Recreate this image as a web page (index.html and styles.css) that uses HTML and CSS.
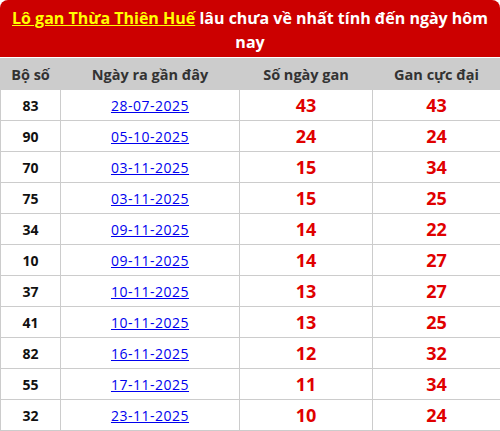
FILE: index.html
```html
<!DOCTYPE html>
<html lang="vi">
<head>
<meta charset="utf-8">
<link rel="stylesheet" href="styles.css">
</head>
<body>
<div class="box">
  <h2 class="title"><a href="#" class="hl">Lô gan Thừa Thiên Huế</a> lâu chưa về nhất tính đến ngày hôm nay</h2>
  <table class="tbl">
    <colgroup><col class="c1"><col class="c2"><col class="c3"><col class="c4"></colgroup>
    <thead>
      <tr><th>Bộ số</th><th>Ngày ra gần đây</th><th>Số ngày gan</th><th>Gan cực đại</th></tr>
    </thead>
    <tbody>
      <tr><td class="num">83</td><td><a href="#" class="date">28-07-2025</a></td><td class="red">43</td><td class="red">43</td></tr>
      <tr><td class="num">90</td><td><a href="#" class="date">05-10-2025</a></td><td class="red">24</td><td class="red">24</td></tr>
      <tr><td class="num">70</td><td><a href="#" class="date">03-11-2025</a></td><td class="red">15</td><td class="red">34</td></tr>
      <tr><td class="num">75</td><td><a href="#" class="date">03-11-2025</a></td><td class="red">15</td><td class="red">25</td></tr>
      <tr><td class="num">34</td><td><a href="#" class="date">09-11-2025</a></td><td class="red">14</td><td class="red">22</td></tr>
      <tr><td class="num">10</td><td><a href="#" class="date">09-11-2025</a></td><td class="red">14</td><td class="red">27</td></tr>
      <tr><td class="num">37</td><td><a href="#" class="date">10-11-2025</a></td><td class="red">13</td><td class="red">27</td></tr>
      <tr><td class="num">41</td><td><a href="#" class="date">10-11-2025</a></td><td class="red">13</td><td class="red">25</td></tr>
      <tr><td class="num">82</td><td><a href="#" class="date">16-11-2025</a></td><td class="red">12</td><td class="red">32</td></tr>
      <tr><td class="num">55</td><td><a href="#" class="date">17-11-2025</a></td><td class="red">11</td><td class="red">34</td></tr>
      <tr><td class="num">32</td><td><a href="#" class="date">23-11-2025</a></td><td class="red">10</td><td class="red">24</td></tr>
    </tbody>
  </table>
</div>
</body>
</html>
```
FILE: styles.css
```css
html, body {
  margin: 0;
  padding: 0;
  background: #fff;
}
body {
  font-family: "Open Sans", "Noto Sans", sans-serif;
  width: 500px;
}
.box {
  width: 500px;
}
.title {
  margin: 0;
  background: #cc0000;
  color: #fff;
  font-size: 16px;
  font-weight: 700;
  line-height: 24px;
  text-align: center;
  padding: 6px 7px 3px;
  height: 48px;
  border-radius: 8px 8px 0 0;
  box-sizing: content-box;
}
.hl {
  color: #ffff00;
  text-decoration: underline;
}
.tbl {
  width: 500px;
  border-collapse: collapse;
  table-layout: fixed;
  margin-top: 1px;
}
.c1 { width: 60px; }
.c2 { width: 179px; }
.c3 { width: 133px; }
.c4 { width: 128px; }
.tbl th {
  background: #cccccc;
  color: #333;
  font-size: 14.5px;
  font-weight: 700;
  height: 31px;
  padding: 0;
  border: 1px solid #cccccc;
  box-sizing: border-box;
}
.tbl td {
  height: 31px;
  padding: 0;
  text-align: center;
  border: 1px solid #cccccc;
  box-sizing: border-box;
}
.num {
  font-size: 14px;
  font-weight: 700;
  color: #111;
}
.date {
  color: #0000ee;
  font-size: 14px;
  letter-spacing: 0.5px;
  text-decoration: underline;
}
.red {
  color: #e00000;
  font-size: 18px;
  font-weight: 700;
}
```
